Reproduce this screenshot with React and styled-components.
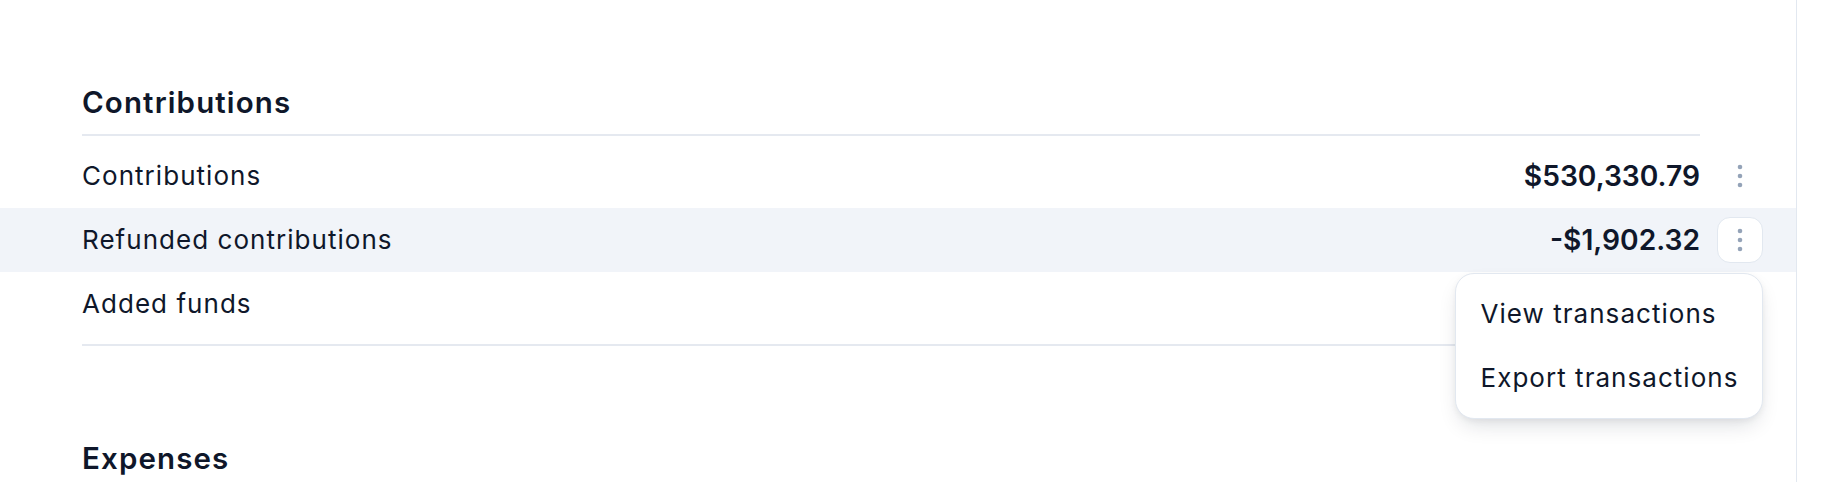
import styled, { createGlobalStyle } from "styled-components";

const GlobalStyle = createGlobalStyle`
  html, body {
    margin: 0;
    padding: 0;
    background: #ffffff;
  }
  body {
    font-family: Inter, "Noto Sans", "Liberation Sans", sans-serif;
    color: #0f172a;
    letter-spacing: 0.065em;
    -webkit-font-smoothing: antialiased;
  }
`;

const sections = [
  {
    title: "Contributions",
    rows: [
      { label: "Contributions", amount: "$530,330.79" },
      { label: "Refunded contributions", amount: "-$1,902.32", open: true },
      { label: "Added funds", amount: "$12,540.00" },
    ],
  },
  {
    title: "Expenses",
    rows: [],
  },
];

const menuItems = ["View transactions", "Export transactions"];

const KebabIcon = () => (
  <svg width="6" height="24" viewBox="0 0 6 24" fill="#94a3b8">
    <circle cx="3" cy="3" r="2.3" />
    <circle cx="3" cy="12" r="2.3" />
    <circle cx="3" cy="21" r="2.3" />
  </svg>
);

const Row = ({ label, amount, open, highlighted }) => (
  <RowBox highlighted={highlighted}>
    <Label>{label}</Label>
    <Amount>{amount}</Amount>
    <Actions>
      <KebabButton active={open}>
        <KebabIcon />
      </KebabButton>
      {open && (
        <Menu>
          {menuItems.map((item) => (
            <MenuItem key={item}>{item}</MenuItem>
          ))}
        </Menu>
      )}
    </Actions>
  </RowBox>
);

export default function App() {
  return (
    <>
      <GlobalStyle />
      <Page>
        <Main>
          {sections.map((section) => (
            <Section key={section.title}>
              <SectionTitle>{section.title}</SectionTitle>
              {section.rows.length > 0 && (
                <>
                  <Rows>
                    {section.rows.map((row) => (
                      <Row key={row.label} {...row} highlighted={row.open} />
                    ))}
                  </Rows>
                  <Rule />
                </>
              )}
            </Section>
          ))}
        </Main>
      </Page>
    </>
  );
}

const Page = styled.div`
  display: flex;
  height: 100vh;
  overflow: hidden;
`;

const Main = styled.main`
  flex: none;
  width: 1796px;
  border-right: 1px solid #e2e8f0;
  padding-top: 81px;
`;

const Section = styled.section`
  & + & {
    margin-top: 91px;
  }
`;

const SectionTitle = styled.h2`
  margin: 0 96px 0 82px;
  padding-bottom: 9.6px;
  font-size: 29.5px;
  line-height: 43.2px;
  font-weight: 600;
  letter-spacing: 0.038em;
  border-bottom: 2px solid #e5e9f0;
`;

const Rows = styled.div`
  padding: 8px 0;
`;

const Rule = styled.div`
  margin: 0 96px 0 82px;
  border-top: 2px solid #e5e9f0;
`;

const RowBox = styled.div`
  display: flex;
  align-items: center;
  height: 64px;
  padding: 0 33px 0 82px;
  background: ${(props) => (props.highlighted ? "#f1f4f9" : "transparent")};
`;

const Label = styled.div`
  flex: 1;
  font-size: 26px;
  line-height: 1.5;
`;

const Amount = styled.div`
  font-size: 28.2px;
  font-weight: 600;
  letter-spacing: 0;
  line-height: 1.5;
`;

const Actions = styled.div`
  position: relative;
  margin-left: 17px;
`;

const KebabButton = styled.button`
  display: flex;
  align-items: center;
  justify-content: center;
  width: 46px;
  height: 46px;
  padding: 0;
  box-sizing: border-box;
  border-radius: 13px;
  border: 1px solid ${(props) => (props.active ? "#e2e8f0" : "transparent")};
  background: ${(props) => (props.active ? "#ffffff" : "transparent")};
  cursor: pointer;
`;

const Menu = styled.div`
  position: absolute;
  top: calc(100% + 10px);
  right: 0;
  z-index: 10;
  padding: 8px 0;
  background: #ffffff;
  border: 1px solid #e2e8f0;
  border-radius: 19px;
  box-shadow: 0 10px 22px -6px rgba(15, 23, 42, 0.16), 0 2px 6px rgba(15, 23, 42, 0.05);
  white-space: nowrap;
`;

const MenuItem = styled.div`
  display: flex;
  align-items: center;
  height: 64px;
  padding: 0 23.5px 0 24.7px;
  font-size: 26px;
  cursor: pointer;
`;
